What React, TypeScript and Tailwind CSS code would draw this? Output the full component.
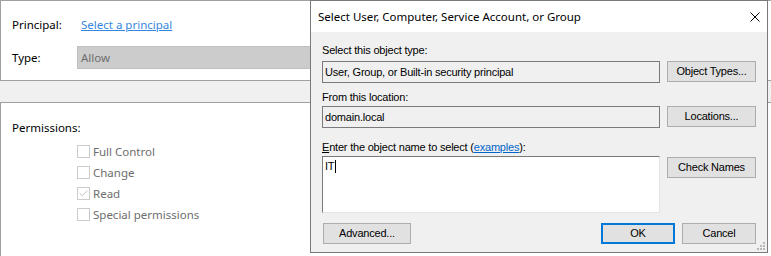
import { Check } from "lucide-react";

const perms = [
  { label: "Full Control", checked: false },
  { label: "Change", checked: false },
  { label: "Read", checked: true },
  { label: "Special permissions", checked: false },
];

const Btn = ({ label, primary }: { label: string; primary?: boolean }) => (
  <div
    className={
      primary
        ? "w-[74px] h-[21px] flex items-center justify-center bg-[#e1e1e1] border-2 border-[#0078d7]"
        : "h-[21px] flex items-center justify-center bg-[#e1e1e1] border border-[#adadad]"
    }
  >
    {label}
  </div>
);

const CloseIcon = () => (
  <svg width="10" height="10" viewBox="0 0 10 10" className="mr-[7px]">
    <path d="M0.5 0.5 L9.5 9.5 M9.5 0.5 L0.5 9.5" stroke="#000" strokeWidth="1" />
  </svg>
);

const Grip = () => (
  <svg width="8" height="8" viewBox="0 0 8 8" className="absolute right-[2px] bottom-[2px]">
    {[
      [6, 0],
      [3, 3],
      [6, 3],
      [0, 6],
      [3, 6],
      [6, 6],
    ].map(([x, y]) => (
      <rect key={`${x}-${y}`} x={x} y={y} width="2" height="2" fill="#b8b8b8" />
    ))}
  </svg>
);

const SelectDialog = () => (
  <div className="absolute left-[310px] top-0 w-[458px] h-[253px] border border-[#7a7a7a] flex flex-col bg-[#f0f0f0]">
    {/* Title bar */}
    <div className="h-[31px] bg-white flex items-center justify-between pl-[7px] font-['Noto_Sans',sans-serif] text-[11.5px] text-black">
      <span>Select User, Computer, Service Account, or Group</span>
      <CloseIcon />
    </div>

    {/* Body */}
    <div className="relative flex-1 flex flex-col px-[11px] font-['Liberation_Sans',Arial,sans-serif] text-[11px] tracking-[-0.2px] text-black">
      <div className="mt-[12px] h-[13px] leading-[13px]">Select this object type:</div>
      <div className="mt-[4px] flex gap-[7px]">
        <div className="w-[338px] h-[22px] border border-[#7a7a7a] flex items-center pl-[2px]">
          User, Group, or Built-in security principal
        </div>
        <div className="w-[89px]">
          <Btn label="Object Types..." />
        </div>
      </div>

      <div className="mt-[8px] h-[13px] leading-[13px]">From this location:</div>
      <div className="mt-[2px] flex gap-[7px]">
        <div className="w-[338px] h-[22px] border border-[#7a7a7a] flex items-center pl-[2px]">domain.local</div>
        <div className="w-[89px]">
          <Btn label="Locations..." />
        </div>
      </div>

      <div className="mt-[13px] h-[13px] leading-[13px]">
        <span className="underline">E</span>nter the object name to select (
        <span className="text-[#0066cc] underline">examples</span>):
      </div>
      <div className="mt-[2px] flex gap-[7px] items-start">
        <div className="w-[338px] h-[57px] bg-white border border-t-[#7a7a7a] border-l-[#7a7a7a] border-r-[#e3e3e3] border-b-[#e3e3e3] pl-[2px] pt-[3px] flex items-start">
          <span className="leading-[13px]">IT</span>
          <span className="w-px h-[13px] bg-black ml-px" />
        </div>
        <div className="w-[89px] mt-px">
          <Btn label="Check Names" />
        </div>
      </div>

      <div className="mt-[10px] flex items-center">
        <div className="w-[88px] ml-px">
          <Btn label="Advanced..." />
        </div>
        <div className="flex-1" />
        <div className="flex gap-[7px]">
          <Btn label="OK" primary />
          <div className="w-[74px]">
            <Btn label="Cancel" />
          </div>
        </div>
      </div>
      <Grip />
    </div>
  </div>
);

export default function App() {
  return (
    <div className="relative w-[771px] h-[256px] bg-white overflow-hidden font-['Noto_Sans',sans-serif] text-[11.5px]">
      {/* Principal / type panel */}
      <div className="h-[81px] border-t border-l border-b border-[#a0a0a0] pl-[11px] pt-[12px] flex flex-col">
        <div className="h-[24px] flex items-center">
          <span className="w-[65px] text-black">Principal:</span>
          <span className="ml-[4px] text-[#3487e0] underline">Select a principal</span>
        </div>
        <div className="mt-[9px] flex items-center">
          <span className="w-[65px] text-black">Type:</span>
          <div className="w-[600px] h-[23px] bg-[#cccccc] border border-[#bfbfbf] flex items-center pl-[3px] text-[#6d6d6d]">
            Allow
          </div>
        </div>
      </div>

      <div className="h-[21px] bg-[#f0f0f0]" />

      {/* Permissions panel */}
      <div className="h-[160px] border-t border-l border-[#a0a0a0] pl-[11px] pt-[17px]">
        <div className="h-[16px] leading-[16px] text-black">Permissions:</div>
        <div className="mt-[9px] ml-[65px] flex flex-col gap-[8px]">
          {perms.map((p) => (
            <div key={p.label} className="h-[13px] flex items-center">
              <div className="w-[13px] h-[13px] border border-[#cccccc] bg-white flex items-center justify-center">
                {p.checked && <Check size={11} strokeWidth={1.5} color="#a8a8a8" />}
              </div>
              <span className="ml-[3px] text-[#6d6d6d] leading-[16px]">{p.label}</span>
            </div>
          ))}
        </div>
      </div>

      <SelectDialog />
    </div>
  );
}
